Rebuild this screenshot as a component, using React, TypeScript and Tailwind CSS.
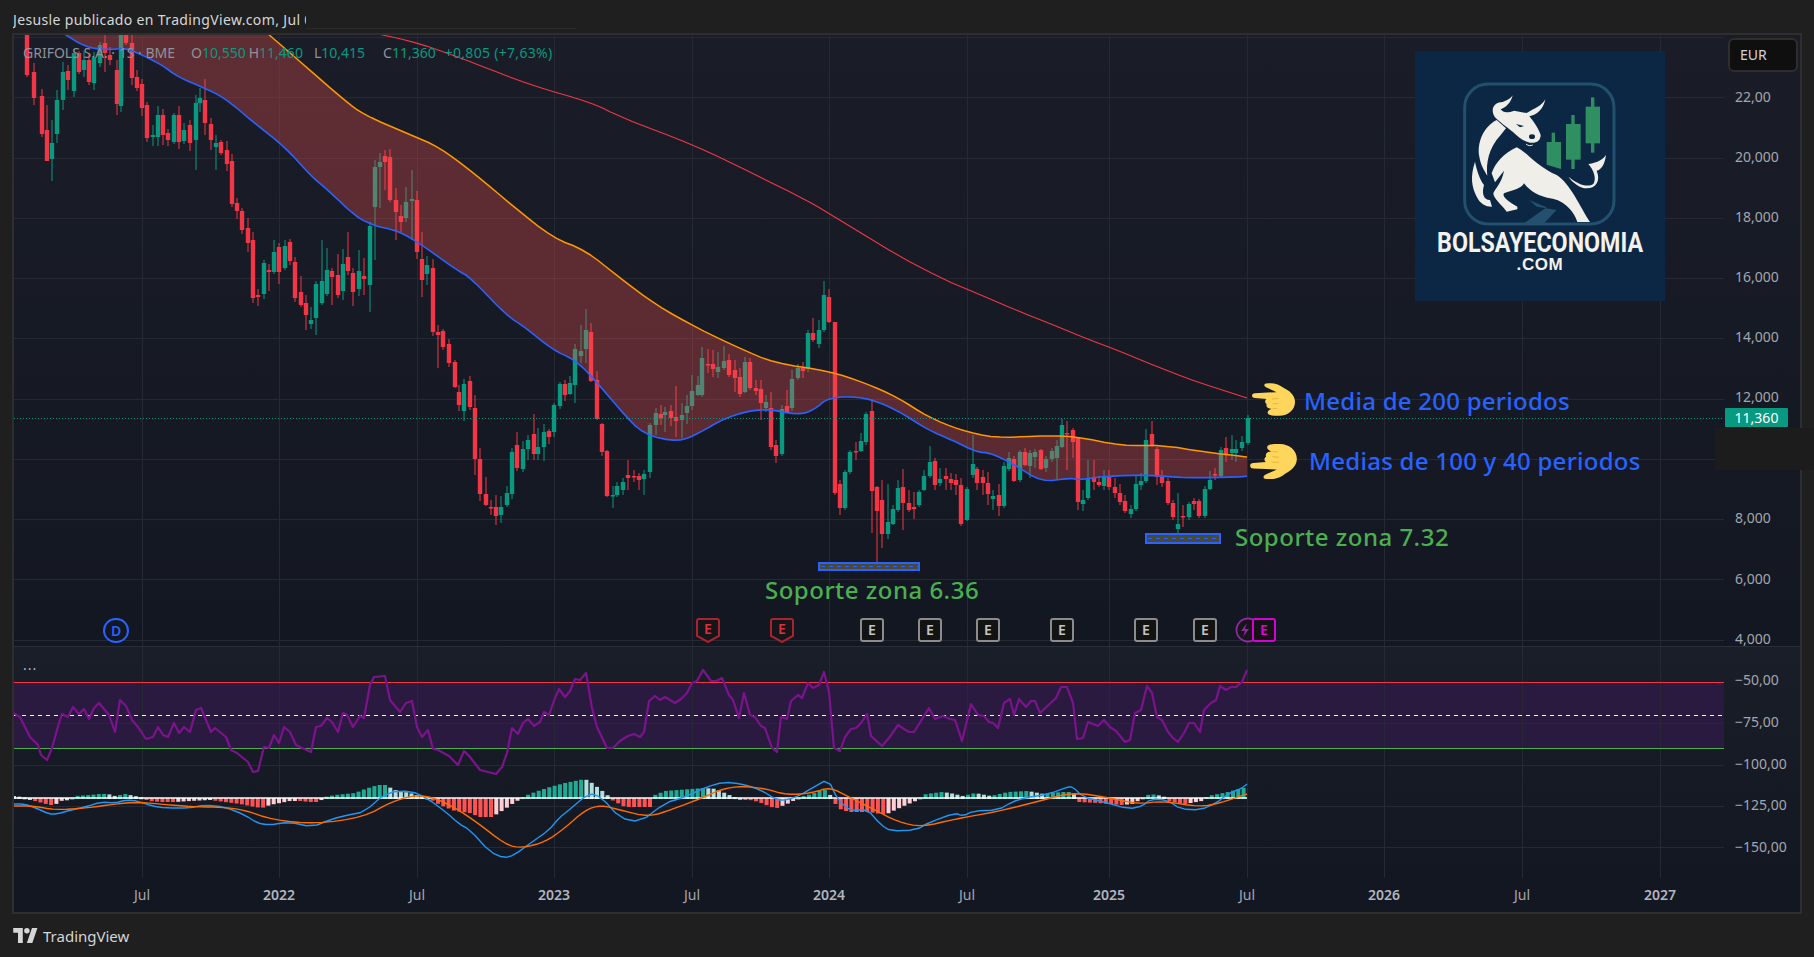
const GRID_X = [142, 279, 417, 554, 692, 829, 967, 1109, 1247, 1384, 1522, 1660];

const TIME_LABELS = [
  { x: 142, label: "Jul" },
  { x: 279, label: "2022", bold: true },
  { x: 417, label: "Jul" },
  { x: 554, label: "2023", bold: true },
  { x: 692, label: "Jul" },
  { x: 829, label: "2024", bold: true },
  { x: 967, label: "Jul" },
  { x: 1109, label: "2025", bold: true },
  { x: 1247, label: "Jul" },
  { x: 1384, label: "2026", bold: true },
  { x: 1522, label: "Jul" },
  { x: 1660, label: "2027", bold: true },
];

const PRICE_LABELS = [
  { y: 97, label: "22,00" },
  { y: 157, label: "20,000" },
  { y: 217, label: "18,000" },
  { y: 277, label: "16,000" },
  { y: 337, label: "14,000" },
  { y: 397, label: "12,000" },
  { y: 518, label: "8,000" },
  { y: 579, label: "6,000" },
  { y: 639, label: "4,000" },
];

const OSC_LABELS = [
  { y: 680, label: "−50,00" },
  { y: 722, label: "−75,00" },
  { y: 764, label: "−100,00" },
  { y: 805, label: "−125,00" },
  { y: 847, label: "−150,00" },
];

// x, body top, body bottom, green?, wick top, wick bottom
type Candle = [number, number, number, number, number?, number?];

const CANDLES: Candle[] = [
  [27, 33, 75, 0], [34, 72, 98, 0], [42, 96, 134, 0], [47, 130, 161, 0, 105, 150], [52, 143, 159, 1, 120, 181],
  [57, 100, 134, 1], [63, 72, 100, 1, 62, 110], [68, 71, 80, 0], [74, 53, 91, 1], [79, 53, 72, 0], [84, 60, 70, 1],
  [89, 60, 82, 0], [94, 58, 83, 1, 52, 90], [100, 45, 63, 1], [105, 43, 53, 0, 33, 72], [110, 55, 60, 0],
  [117, 70, 104, 0, 60, 115], [121, 33, 106, 1], [126, 33, 43, 0], [132, 43, 78, 0], [137, 77, 88, 0], [142, 84, 108, 0],
  [147, 105, 138, 0], [153, 135, 137, 1], [158, 115, 137, 1, 106, 146], [163, 115, 135, 0], [168, 133, 140, 0],
  [174, 115, 142, 1], [179, 115, 142, 0], [184, 130, 141, 1], [190, 125, 143, 0], [196, 103, 140, 1, 95, 170],
  [200, 98, 103, 1], [205, 100, 123, 0, 79, 135], [211, 124, 140, 0], [216, 143, 147, 1, 135, 170], [221, 142, 153, 0],
  [227, 150, 164, 0], [232, 161, 204, 0], [237, 203, 211, 0], [242, 211, 230, 0], [248, 228, 243, 0], [253, 240, 298, 0],
  [258, 295, 297, 0, 289, 306], [264, 263, 294, 1, 260, 299], [269, 270, 272, 0, 264, 291], [274, 252, 272, 1, 240, 274],
  [279, 247, 272, 0, 243, 284], [285, 246, 268, 1, 240, 270], [290, 242, 261, 0], [295, 262, 298, 0, 257, 302],
  [301, 292, 305, 0, 276, 307], [306, 303, 315, 0, 295, 330], [311, 320, 324, 1, 307, 329], [316, 284, 318, 1, 281, 335],
  [322, 281, 303, 1, 240, 305], [327, 270, 294, 1, 248, 296], [332, 271, 277, 0, 268, 305], [338, 275, 295, 0, 254, 298],
  [343, 264, 291, 1, 249, 300], [348, 257, 271, 0, 232, 275], [353, 273, 292, 0, 268, 306], [359, 271, 289, 1, 250, 296],
  [364, 276, 279, 0, 258, 295], [370, 226, 285, 1, 222, 312], [375, 167, 207, 1, 160, 260], [380, 162, 167, 1, 153, 208],
  [385, 156, 162, 0, 150, 190], [390, 157, 200, 0, 149, 202], [396, 200, 212, 0, 188, 240], [401, 216, 222, 0, 205, 232],
  [406, 202, 218, 1, 187, 222], [412, 199, 201, 1, 170, 240], [417, 200, 252, 0], [422, 259, 280, 0, 232, 297],
  [427, 265, 274, 1, 256, 285], [433, 268, 332, 0, 259, 336], [438, 332, 335, 0, 325, 368], [443, 331, 347, 0, 329, 350],
  [449, 344, 363, 0, 339, 367], [455, 362, 387, 0, 360, 388], [459, 392, 405, 0, 385, 411], [464, 384, 411, 1, 379, 421],
  [470, 381, 407, 0, 376, 410], [475, 408, 459, 0, 395, 475], [480, 459, 494, 0, 448, 501], [486, 494, 505, 0, 477, 506],
  [491, 507, 508, 0, 500, 515], [496, 507, 516, 0, 495, 525], [501, 507, 515, 1, 496, 523], [507, 493, 505, 1, 486, 507],
  [512, 452, 494, 1, 448, 499], [517, 445, 468, 0, 432, 471], [523, 449, 469, 1, 441, 472], [528, 440, 449, 1, 435, 460],
  [534, 434, 454, 0, 414, 460], [538, 447, 454, 1, 428, 460], [544, 432, 447, 1, 424, 461], [549, 431, 437, 0, 429, 444],
  [554, 405, 432, 1, 403, 437], [560, 384, 406, 1, 382, 409], [565, 384, 395, 0, 380, 401], [570, 383, 394, 1, 376, 395],
  [575, 349, 385, 1, 344, 403], [581, 351, 356, 1, 325, 363], [586, 330, 349, 1, 309, 363], [591, 332, 381, 0, 323, 382],
  [597, 380, 419, 0, 371, 420], [602, 424, 452, 0, 423, 456], [607, 451, 496, 0, 450, 497], [613, 495, 496, 1, 486, 508],
  [617, 486, 495, 1, 482, 497], [623, 482, 490, 1, 478, 495], [628, 475, 478, 0, 460, 490], [634, 476, 477, 0, 470, 482],
  [639, 476, 480, 0, 473, 490], [644, 474, 479, 1, 470, 495], [650, 425, 472, 1, 423, 478], [656, 413, 425, 1, 408, 435],
  [661, 414, 418, 0, 405, 425], [665, 412, 415, 1, 407, 432], [671, 411, 418, 0, 405, 426], [676, 417, 421, 0, 386, 437],
  [682, 415, 420, 1, 403, 438], [687, 406, 413, 1, 395, 424], [692, 391, 406, 1, 375, 410], [698, 385, 395, 1, 376, 396],
  [702, 358, 395, 1, 347, 397], [708, 364, 365, 0, 349, 373], [713, 364, 369, 0, 350, 377], [718, 367, 372, 1, 352, 378],
  [724, 361, 368, 1, 346, 370], [729, 360, 375, 0, 354, 377], [735, 370, 378, 0, 360, 392], [740, 377, 394, 0, 368, 397],
  [745, 362, 392, 1, 357, 393], [750, 362, 388, 0, 358, 390], [756, 388, 391, 0, 380, 395], [761, 389, 403, 0, 380, 420],
  [766, 402, 408, 1, 395, 412], [771, 408, 447, 0, 392, 450], [776, 445, 456, 0, 440, 463], [782, 409, 454, 1, 405, 456],
  [787, 406, 413, 0, 390, 413], [792, 379, 408, 1, 370, 411], [798, 368, 378, 1, 364, 380], [803, 368, 371, 0, 362, 378],
  [808, 333, 369, 1, 330, 372], [813, 333, 340, 0, 318, 342], [819, 330, 344, 1, 320, 348], [824, 295, 330, 1, 281, 332],
  [829, 297, 322, 0, 289, 323], [835, 322, 493, 0, 322, 495], [840, 484, 508, 0, 480, 515], [845, 472, 508, 1, 470, 510],
  [850, 452, 472, 1, 450, 474], [856, 451, 452, 0, 442, 460], [861, 441, 451, 1, 433, 452], [866, 414, 442, 1, 412, 445],
  [872, 411, 491, 0, 399, 533], [877, 487, 511, 0, 486, 567], [882, 500, 534, 0, 480, 548], [888, 522, 534, 1, 484, 539],
  [893, 509, 524, 1, 505, 525], [898, 488, 510, 1, 480, 512], [903, 487, 503, 0, 469, 530], [909, 503, 510, 0, 490, 512],
  [914, 507, 509, 0, 492, 519], [919, 492, 505, 1, 490, 507], [924, 476, 490, 1, 470, 491], [930, 462, 476, 1, 446, 478],
  [935, 461, 485, 0, 458, 490], [940, 479, 483, 1, 468, 486], [946, 476, 479, 0, 468, 490], [951, 479, 483, 0, 473, 490],
  [956, 480, 485, 0, 474, 495], [961, 485, 524, 0, 478, 526], [967, 489, 520, 1, 487, 521], [973, 464, 475, 1, 435, 478],
  [977, 469, 483, 0, 467, 490], [983, 477, 483, 0, 470, 495], [988, 483, 494, 0, 472, 505], [993, 496, 499, 1, 490, 510],
  [999, 495, 506, 0, 484, 516], [1004, 466, 506, 1, 462, 508], [1009, 458, 469, 1, 452, 471], [1014, 459, 481, 0, 456, 482],
  [1020, 452, 480, 1, 450, 482], [1025, 452, 465, 0, 448, 466], [1030, 453, 466, 1, 450, 478], [1035, 452, 457, 1, 449, 468],
  [1041, 450, 469, 0, 449, 470], [1046, 459, 468, 1, 456, 472], [1052, 451, 459, 1, 448, 462], [1057, 446, 458, 1, 440, 480],
  [1062, 425, 447, 1, 419, 448], [1067, 433, 434, 0, 421, 470], [1073, 430, 442, 0, 428, 458], [1078, 438, 502, 0, 437, 510],
  [1083, 500, 504, 1, 490, 511], [1088, 478, 498, 1, 460, 500], [1094, 477, 482, 0, 460, 490], [1099, 482, 485, 0, 476, 487],
  [1104, 477, 486, 1, 470, 490], [1109, 476, 487, 0, 470, 490], [1115, 487, 493, 0, 478, 498], [1120, 493, 502, 0, 484, 505],
  [1125, 501, 511, 0, 495, 513], [1131, 509, 514, 1, 505, 518], [1136, 484, 509, 1, 476, 511], [1141, 481, 485, 1, 473, 490],
  [1146, 440, 481, 1, 429, 483], [1152, 434, 446, 0, 421, 447], [1157, 449, 477, 0, 447, 485], [1162, 477, 483, 0, 470, 487],
  [1168, 481, 503, 0, 478, 505], [1173, 503, 517, 0, 500, 520], [1178, 524, 529, 1, 493, 539], [1183, 516, 517, 0, 505, 527],
  [1189, 504, 517, 1, 502, 520], [1194, 501, 504, 0, 498, 510], [1199, 501, 516, 0, 499, 518], [1205, 489, 516, 1, 486, 518],
  [1210, 480, 489, 1, 471, 490], [1215, 474, 475, 0, 468, 480], [1221, 450, 476, 1, 447, 478], [1226, 448, 455, 0, 437, 462],
  [1232, 449, 453, 1, 435, 460], [1236, 449, 453, 1, 440, 462], [1242, 442, 448, 1, 436, 451], [1248, 418, 443, 1, 415, 445],
];

const ORANGE_RAW = "267,33 304,65 344,100 364,115 411,135 439,147 474,173 514,207 553,238 585,250 620,278 656,305 699,329 739,348 774,363 829,371 865,383 897,397 928,417 960,430 995,438 1035,436 1074,436 1122,446 1161,445 1205,452 1247,457";
const BLUE_RAW = "45,25 63,33 85,47 107,50 126,48 142,55 162,65 178,77 202,87 225,98 253,122 285,147 312,177 328,190 356,217 375,226 395,230 415,240 458,271 470,277 506,315 526,328 553,350 573,359 589,373 620,410 644,435 679,442 699,433 727,417 762,408 798,415 814,410 829,397 865,397 897,410 928,430 952,440 976,452 991,453 1015,465 1041,482 1071,478 1078,480 1106,476 1150,475 1185,478 1240,477 1247,476";
const RED_RAW = "374,33 419,43 474,63 530,85 593,103 620,117 694,145 752,173 810,202 833,216 922,270 999,303 1070,332 1134,357 1185,378 1247,398";

const RSI = "13,713 20,717 30,737 38,745 41,755 47,760 52,748 59,723 62,714 68,717 73,707 79,714 84,709 89,719 94,708 99,703 109,715 115,732 120,700 126,706 132,720 138,727 146,739 153,737 158,727 163,735 168,737 174,723 179,733 184,727 190,732 196,710 201,708 211,732 215,728 226,737 231,750 237,753 248,762 253,772 258,771 264,747 269,748 274,735 279,743 284,727 290,732 296,745 302,748 311,752 316,727 321,726 327,718 332,722 338,732 343,713 347,715 353,727 360,716 364,718 370,685 374,677 385,676 390,700 400,712 406,703 412,701 417,727 422,737 428,730 433,749 438,750 449,756 458,765 464,751 470,757 480,770 496,774 502,767 507,753 512,728 518,734 523,723 528,719 534,726 540,722 544,712 549,715 555,698 559,689 565,697 570,691 575,679 580,680 586,673 592,708 597,727 607,748 613,748 620,741 628,736 634,734 640,737 644,732 649,701 655,696 660,700 665,697 675,703 681,699 687,693 692,683 697,681 703,670 711,681 716,681 722,678 729,695 733,700 739,718 744,693 750,715 755,717 761,726 765,728 772,748 777,752 781,717 787,719 791,701 798,695 802,698 808,683 813,688 819,685 824,672 829,692 834,748 840,751 845,737 851,729 856,728 861,723 867,714 871,736 882,746 889,738 898,725 904,729 909,732 914,732 929,708 935,719 943,716 950,719 955,720 962,741 971,704 978,715 984,716 989,722 993,723 998,728 1004,703 1010,699 1014,715 1019,699 1026,707 1031,701 1035,701 1040,713 1056,698 1061,687 1067,687 1073,703 1077,739 1083,738 1088,722 1098,726 1104,720 1110,727 1116,731 1125,742 1130,740 1135,713 1141,710 1147,686 1152,693 1157,717 1162,720 1168,732 1173,738 1178,742 1184,733 1189,723 1194,723 1200,732 1204,710 1211,703 1216,700 1220,686 1226,690 1231,687 1236,687 1242,682 1247,670";

const MACD_RAW = "13,804 24,804 36,808 49,814 57,814 71,810 85,807 101,802 115,803 126,800 138,801 152,806 166,808 190,808 204,805 225,807 245,815 257,823 269,825 289,822 312,827 332,819 348,815 364,812 387,792 411,791 427,798 447,813 458,823 470,830 490,852 504,858 514,855 532,842 549,830 559,818 569,810 589,793 601,797 620,818 640,822 665,803 685,797 706,787 724,782 742,784 761,790 777,800 787,800 800,795 812,788 828,779 838,800 851,811 867,809 881,825 891,831 916,830 930,822 955,813 963,816 973,811 998,810 1012,802 1024,798 1049,794 1067,787 1073,787 1083,797 1104,802 1129,809 1142,806 1151,799 1167,800 1181,809 1200,810 1216,803 1228,794 1242,788 1247,784";
const SIGNAL_RAW = "13,806 34,806 55,810 87,808 115,804 138,802 170,805 198,807 221,807 245,810 273,820 316,824 364,817 391,802 411,796 427,796 447,803 474,820 506,845 522,848 545,842 565,828 585,810 601,805 620,810 649,817 673,809 702,798 722,789 742,786 767,789 787,795 812,793 830,787 849,797 873,809 898,822 922,827 955,819 995,812 1036,802 1073,792 1110,798 1138,804 1163,801 1200,807 1220,803 1247,794";

const HIST_ANCHORS = [
  [14, 2], [30, 0], [35, -2], [50, -6], [55, -6], [60, -2], [70, -1], [75, 2], [90, 3], [100, 4], [108, 4], [115, 2], [125, 4], [135, 2], [145, 0],
  [150, -2], [160, -3], [175, -3], [190, -2], [210, -1], [225, -3], [240, -5], [255, -8], [262, -9], [270, -6], [280, -4], [290, -2], [300, -2], [310, -3],
  [318, -3], [325, 1], [335, 3], [345, 4], [355, 5], [365, 9], [378, 13], [385, 13], [395, 8], [410, 5], [420, 2], [430, 0], [440, -6], [455, -12], [470, -14],
  [480, -18], [492, -18], [505, -10], [515, -3], [525, 2], [535, 6], [550, 11], [565, 15], [585, 19], [592, 15], [605, 5], [612, -1], [625, -8], [640, -8], [650, -8],
  [655, 3], [665, 7], [704, 10], [718, 9], [718, 8], [734, 1], [750, -1], [759, -3], [771, -8], [777, -9], [787, -5], [795, -1], [800, 1], [812, 4], [822, 8], [828, 8],
  [832, -1], [840, -10], [849, -13], [859, -13], [869, -13], [881, -15], [887, -15], [893, -12], [906, -6], [918, -1], [926, 4], [942, 6], [950, 5], [963, 2], [975, 5],
  [991, 2], [1008, 6], [1028, 7], [1044, 4], [1061, 6], [1073, 6], [1079, -3], [1098, -4], [1122, -6], [1132, -5], [1140, -1], [1150, 4], [1163, 2], [1169, -2],
  [1185, -5], [1202, -2], [1208, 2], [1228, 6], [1247, 11],
];

function histAt(x: number) {
  for (let i = 1; i < HIST_ANCHORS.length; i++) {
    const [x1, v1] = HIST_ANCHORS[i];
    const [x0, v0] = HIST_ANCHORS[i - 1];
    if (x <= x1) return x1 === x0 ? v1 : v0 + ((v1 - v0) * (x - x0)) / (x1 - x0);
  }
  return 0;
}

const HIST = Array.from({ length: 233 }, (_, i) => {
  const x = 14 + i * 5.3;
  return { x, v: histAt(x), prev: histAt(x - 5.3) };
});

// rounds the corners of a hand-read line so it looks like a moving average
function smooth(raw: string, rounds = 2) {
  let pts = raw.split(" ").map((p) => p.split(",").map(Number));
  for (let r = 0; r < rounds; r++) {
    const next = [pts[0]];
    for (let i = 0; i < pts.length - 1; i++) {
      const [ax, ay] = pts[i];
      const [bx, by] = pts[i + 1];
      next.push([ax * 0.75 + bx * 0.25, ay * 0.75 + by * 0.25]);
      next.push([ax * 0.25 + bx * 0.75, ay * 0.25 + by * 0.75]);
    }
    next.push(pts[pts.length - 1]);
    pts = next;
  }
  return pts.map((p) => `${p[0].toFixed(1)},${p[1].toFixed(1)}`);
}

const ORANGE = smooth(ORANGE_RAW);
const BLUE = smooth(BLUE_RAW);
const RED_MA = smooth(RED_RAW);
const MACD = smooth(MACD_RAW, 1).join(" ");
const SIGNAL = smooth(SIGNAL_RAW, 2).join(" ");

// band between the 100 and 40 period averages
const BAND = [...BLUE, ...[...ORANGE].reverse(), "267,20", "45,20"].join(" ");

function histColor(v: number, prev: number) {
  if (v >= 0) return v >= prev ? "#22ab94" : "#b2dfdb";
  return v <= prev ? "#ff5252" : "#ffcdd2";
}

function Grid({ ys, y1, y2 }: { ys: number[]; y1: number; y2: number }) {
  return (
    <g stroke="#252933" strokeWidth="1">
      {ys.map((y) => (
        <line key={y} x1="14" x2="1724" y1={y + 0.5} y2={y + 0.5} />
      ))}
      {GRID_X.map((x) => (
        <line key={x} x1={x + 0.5} x2={x + 0.5} y1={y1} y2={y2} />
      ))}
    </g>
  );
}

function MainChart() {
  return (
    <svg className="block w-[1710px] h-[611px]" viewBox="14 35 1710 611">
      <Grid ys={[37, 97, 158, 218, 278, 338, 399, 459, 519, 579, 640]} y1={35} y2={646} />
      {CANDLES.map(([x, top, bottom, green, wt, wb], i) => {
        const color = green ? "#089981" : "#f23645";
        const wickTop = wt ?? top - 2 - (i * 7) % 9;
        const wickBottom = wb ?? bottom + 2 + (i * 5) % 9;
        return (
          <g key={i}>
            <line x1={x} x2={x} y1={wickTop} y2={wickBottom} stroke={color} strokeWidth="1" />
            <rect x={x - 2.2} y={top} width="4.4" height={Math.max(bottom - top, 1.5)} fill={color} />
          </g>
        );
      })}
      <polygon points={BAND} fill="#ff5252" fillOpacity="0.3" />
      <polyline points={RED_MA.join(" ")} fill="none" stroke="#f23645" strokeWidth="1.1" />
      <polyline points={ORANGE.join(" ")} fill="none" stroke="#ff9800" strokeWidth="1.5" />
      <polyline points={BLUE.join(" ")} fill="none" stroke="#2962ff" strokeWidth="1.6" />
      <line x1="14" x2="1724" y1="418.5" y2="418.5" stroke="#089981" strokeWidth="1" strokeDasharray="1 2" />
      <g>
        <rect x="819" y="563" width="100" height="7" fill="#4a4a30" stroke="#2962ff" strokeWidth="2" />
        <line x1="821" x2="918" y1="566.5" y2="566.5" stroke="#2962ff" strokeWidth="1" strokeDasharray="4 4" />
        <rect x="1146" y="534" width="74" height="9" fill="#4a4a30" stroke="#2962ff" strokeWidth="2" />
        <line x1="1148" x2="1219" y1="538.5" y2="538.5" stroke="#2962ff" strokeWidth="1" strokeDasharray="4 4" />
      </g>
    </svg>
  );
}

function LowerChart() {
  return (
    <svg className="block w-[1710px] h-[231px]" viewBox="14 647 1710 231">
      <rect x="14" y="682" width="1710" height="66" fill="#2a1a3f" />
      <Grid ys={[723, 765, 806, 847]} y1={647} y2={878} />
      <line x1="14" x2="1724" y1="682.5" y2="682.5" stroke="#f23645" strokeWidth="1.2" />
      <line x1="14" x2="1724" y1="748.5" y2="748.5" stroke="#4caf50" strokeWidth="1.2" />
      <line x1="14" x2="1724" y1="715.5" y2="715.5" stroke="#ffffff" strokeWidth="1" strokeDasharray="4 4" />
      <polyline points={RSI} fill="none" stroke="#7b148c" strokeWidth="2.2" strokeLinejoin="round" />
      {HIST.map(({ x, v, prev }) => (
        <rect
          key={x}
          x={x - 2}
          y={v >= 0 ? 798 - v : 798}
          width="4"
          height={Math.max(Math.abs(v), 1) + 1}
          fill={histColor(v, prev)}
        />
      ))}
      <line x1="14" x2="1247" y1="798" y2="798" stroke="#ffffff" strokeWidth="1.6" />
      <polyline points={MACD} fill="none" stroke="#2196f3" strokeWidth="1.4" />
      <polyline points={SIGNAL} fill="none" stroke="#ff6d00" strokeWidth="1.4" />
    </svg>
  );
}

function BullLogo() {
  return (
    <div className="absolute left-[1401px] top-[16px] w-[250px] h-[250px] bg-[#0b2743] flex flex-col items-center">
      <svg className="block w-[250px] h-[176px] shrink-0" viewBox="105 93 750 528">
        <rect x="254" y="192" width="448" height="420" rx="70" fill="none" stroke="#23506e" strokeWidth="9" />
        <path d="M447 540 L500 562 L432 610 L492 610 L530 570 L470 560 Z" fill="#23506e" />
        <g fill="#2f8f62">
          <rect x="515" y="338" width="10" height="40" />
          <path d="M500 366 H543 V447 L500 434 Z" />
          <rect x="574" y="285" width="10" height="162" />
          <rect x="558" y="312" width="44" height="107" />
          <rect x="633" y="232" width="10" height="166" />
          <rect x="617" y="260" width="43" height="110" />
        </g>
        <g fill="#f0eee9">
          <path d="M345 292 C328 265 345 246 368 246 C383 241 393 234 398 226 C393 250 376 263 362 268 C370 280 385 278 402 272 L440 279 C465 264 485 258 496 238 C490 268 470 285 448 289 C462 305 478 330 482 345 C482 362 470 370 450 368 C430 365 415 350 398 335 C380 322 358 305 345 292 Z" />
          <path d="M350 300 C310 320 290 370 298 410 C302 435 312 450 322 467 C318 430 325 385 362 345 L378 325 Z" />
          <path d="M410 382 C440 395 470 440 530 465 C570 490 600 560 630 606 L592 606 C585 580 555 540 510 535 C480 530 450 515 432 490 C425 505 400 510 372 520 C365 530 385 545 412 560 L412 568 L380 575 C365 555 340 535 340 520 C345 505 365 490 372 452 L345 487 L335 460 C345 430 370 400 410 382 Z" />
          <path d="M285 425 C270 470 275 500 290 530 C300 550 315 560 336 560 L330 540 C310 540 305 520 312 495 C300 480 290 450 285 425 Z" />
          <path d="M565 470 C590 490 620 505 640 492 C650 478 642 450 625 432 C640 430 665 425 678 405 C675 430 665 450 650 452 C662 480 650 505 620 505 C600 505 580 490 565 470 Z" />
        </g>
        <path d="M408 312 L432 318 L420 322 Z" fill="#0b2743" />
        <ellipse cx="456" cy="350" rx="9" ry="7" fill="#0b2743" />
        <path d="M438 372 C445 378 452 378 458 375" fill="none" stroke="#f0eee9" strokeWidth="3" />
      </svg>
      <p className="mt-[4px] font-['Roboto',sans-serif] font-bold text-[28px] leading-[24px] text-[#f4f2ee] scale-x-[0.83] whitespace-nowrap">
        BOLSAYECONOMIA
      </p>
      <p className="font-['Liberation_Sans',sans-serif] font-bold text-[17px] leading-[20px] tracking-[0.6px] text-[#f4f2ee]">
        .COM
      </p>
    </div>
  );
}

function Hand({ className, flip }: { className: string; flip?: boolean }) {
  return (
    <svg className={className} viewBox="0 0 44 33">
      <g transform={flip ? "translate(0 33) scale(1 -1)" : undefined}>
        <path
          d="M15 0 C22 -1 28 1 33 5 C41 9 44 14 44 19 C44 27 37 33 28 33 C23 33 16 33 16 30 C16 28 18 27 20 26 C16 26 14 24 15 21 C13 20 13 17 15 16 L3 15 C1 15 0 14 0 12.500 C0 11 1 10 3 10 L25 9 C22 7 15 5 13 3 C12 1 13 0 15 0 Z"
          fill="#ffd65c"
        />
        <path d="M20 16 L27 15.500 M21 21 L27 20.500 M21 26 L26 25.500" stroke="#eeb23c" strokeWidth="1" fill="none" />
      </g>
    </svg>
  );
}

function EventBadge({ x, kind }: { x: number; kind: "gray" | "red" }) {
  if (kind === "red") {
    return (
      <div className="absolute top-[583px] w-[24px] h-[25px] -translate-x-1/2" style={{ left: x - 14 }}>
        <svg className="absolute inset-0 w-[24px] h-[25px]" viewBox="0 0 24 25">
          <path d="M3 1 H21 Q23 1 23 3 V18 L12 24 L1 18 V3 Q1 1 3 1 Z" fill="#15151a" stroke="#a82530" strokeWidth="2" />
        </svg>
        <span className="absolute inset-0 text-center text-[14px] leading-[21px] font-semibold text-[#e0303c]">E</span>
      </div>
    );
  }
  return (
    <div
      className="absolute top-[583px] w-[24px] h-[24px] -translate-x-1/2 rounded-[3px] border-2 border-[#8c8c8c] bg-[#131313] text-center text-[14px] leading-[20px] font-semibold text-[#c4c4c4]"
      style={{ left: x - 14 }}
    >
      E
    </div>
  );
}

function Overlays() {
  return (
    <>
      <div className="absolute left-[9px] top-[9px] flex whitespace-nowrap text-[14px] leading-[18px] text-[#8f929b]">
        <span className="mr-[16px]">GRIFOLS S.A. · 1S · BME</span>
        <span className="mr-[3px]">O<span className="text-[#089981]">10,550</span></span>
        <span className="mr-[11px]">H<span className="text-[#089981]">11,460</span></span>
        <span className="mr-[18px]">L<span className="text-[#089981]">10,415</span></span>
        <span className="mr-[9px]">C<span className="text-[#089981]">11,360</span></span>
        <span className="tracking-[0.3px] text-[#089981]">+0,805 (+7,63%)</span>
      </div>

      <div className="absolute left-[89px] top-[583px] w-[26px] h-[25px] rounded-full border-2 border-[#2962ff] bg-[#131722] text-center text-[14px] leading-[21px] font-semibold text-[#2962ff]">
        D
      </div>

      <EventBadge x={708} kind="red" />
      <EventBadge x={782} kind="red" />
      {[872, 930, 988, 1062, 1146, 1205].map((x) => (
        <EventBadge key={x} x={x} kind="gray" />
      ))}

      <svg className="absolute left-[1221px] top-[582px] w-[26px] h-[26px]" viewBox="0 0 26 26">
        <circle cx="13" cy="13" r="11.500" fill="#15151a" stroke="#8e2aa0" strokeWidth="1.8" />
        <path d="M12 6 L6 14 H10 L8 20 L14 12 H10 Z" fill="#8e2aa0" />
      </svg>
      <div className="absolute left-[1238px] top-[583px] w-[24px] h-[24px] rounded-[3px] border-2 border-[#d800d8] bg-[#131313] text-center text-[14px] leading-[20px] font-semibold text-[#e000e0]">
        E
      </div>

      <Hand className="absolute left-[1238px] top-[348px] w-[43px] h-[33px]" />
      <Hand className="absolute left-[1236px] top-[409px] w-[47px] h-[35px]" flip />

      <p className="absolute left-[1290px] top-[348px] text-[24px] leading-[36px] tracking-[0.25px] font-medium whitespace-nowrap text-[#2962ff]">
        Media de 200 periodos
      </p>
      <p className="absolute left-[1295px] top-[408px] text-[24px] leading-[36px] tracking-[0.25px] font-medium whitespace-nowrap text-[#2962ff]">
        Medias de 100 y 40 periodos
      </p>
      <p className="absolute left-[1221px] top-[484px] text-[24px] leading-[36px] tracking-[0.5px] font-medium whitespace-nowrap text-[#4caf50]">
        Soporte zona 7.32
      </p>
      <p className="absolute left-[751px] top-[537px] text-[24px] leading-[36px] tracking-[0.5px] font-medium whitespace-nowrap text-[#4caf50]">
        Soporte zona 6.36
      </p>

      <BullLogo />
    </>
  );
}

function AxisLabel({ y, top, label }: { y: number; top: number; label: string }) {
  return (
    <span className="absolute left-[11px] -translate-y-1/2 text-[14px] leading-[16px] text-[#a3a6af]" style={{ top: y - top }}>
      {label}
    </span>
  );
}

export default function App() {
  return (
    <div className="relative w-screen h-screen overflow-hidden bg-[#1f1f1f] font-['Noto_Sans',sans-serif] text-[#d1d4dc]">
      {/* Header */}
      <div className="h-[33px] pl-[13px] flex items-start">
        <p className="w-[293px] overflow-hidden whitespace-nowrap pt-[11px] text-[14px] leading-[18px] tracking-[0.35px] text-[#d6d6d6]">
          Jesusle publicado en TradingView.com, Jul 01, 2025
        </p>
        <div className="mt-[28px] w-[270px] h-px bg-[#2b2b2b]" />
      </div>

      {/* Chart */}
      <div className="ml-[12px] w-[1790px] h-[881px] border-2 border-[#2e2e2e] flex flex-col">
        <div className="flex h-[611px]">
          <div className="relative w-[1710px] bg-linear-to-b from-[#1a1d27] to-[#131722]">
            <MainChart />
            <Overlays />
          </div>
          <div className="relative flex-1 bg-linear-to-b from-[#1a1d27] to-[#131722]">
            {PRICE_LABELS.map((p) => (
              <AxisLabel key={p.label} y={p.y} top={35} label={p.label} />
            ))}
            <div className="absolute left-[4px] top-[3px] w-[70px] h-[34px] rounded-[6px] border-2 border-[#2e2e2e] bg-[#0f0f0f] pl-[10px] text-[14px] leading-[30px] text-[#d1d4dc]">
              EUR
            </div>
            <div className="absolute left-[1px] top-[373px] w-[63px] h-[19px] rounded-[1px] bg-[#089981] text-center text-[14px] leading-[19px] text-white">
              11,360
            </div>
          </div>
        </div>

        <div className="flex h-[232px] border-t border-[#2a2e39]">
          <div className="relative w-[1710px] bg-linear-to-b from-[#191e29] to-[#131722]">
            <LowerChart />
            <p className="absolute left-[9px] top-[9px] text-[14px] leading-[18px] tracking-[1px] text-[#b2b5be]">...</p>
          </div>
          <div className="relative flex-1 bg-linear-to-b from-[#191e29] to-[#131722]">
            {OSC_LABELS.map((p) => (
              <AxisLabel key={p.label} y={p.y} top={647} label={p.label} />
            ))}
          </div>
        </div>

        <div className="relative flex-1 bg-[#131722]">
          {TIME_LABELS.map((t) => (
            <span
              key={t.x}
              className={
                t.bold
                  ? "absolute top-[8px] -translate-x-1/2 text-[14px] leading-[18px] font-semibold text-[#b2b5be]"
                  : "absolute top-[8px] -translate-x-1/2 text-[14px] leading-[18px] text-[#a3a6af]"
              }
              style={{ left: t.x - 14 }}
            >
              {t.label}
            </span>
          ))}
        </div>
      </div>

      {/* Footer */}
      <div className="h-[43px] pl-[13px] flex items-center gap-[5px]">
        <svg className="w-[25px] h-[15px]" viewBox="0 0 36 22" fill="#d6d6d6">
          <path d="M14 22H7V7H0V0h14v22zM28 22h-8l7.500-22h8L28 22z" />
          <circle cx="20" cy="4" r="4" />
        </svg>
        <span className="text-[15px] leading-[18px] text-[#d6d6d6]">TradingView</span>
      </div>

      {/* box that covers the axis below the last price */}
      <div className="absolute left-[1715px] top-[428px] right-0 h-[42px] bg-[#1c1c1c]" />
    </div>
  );
}
